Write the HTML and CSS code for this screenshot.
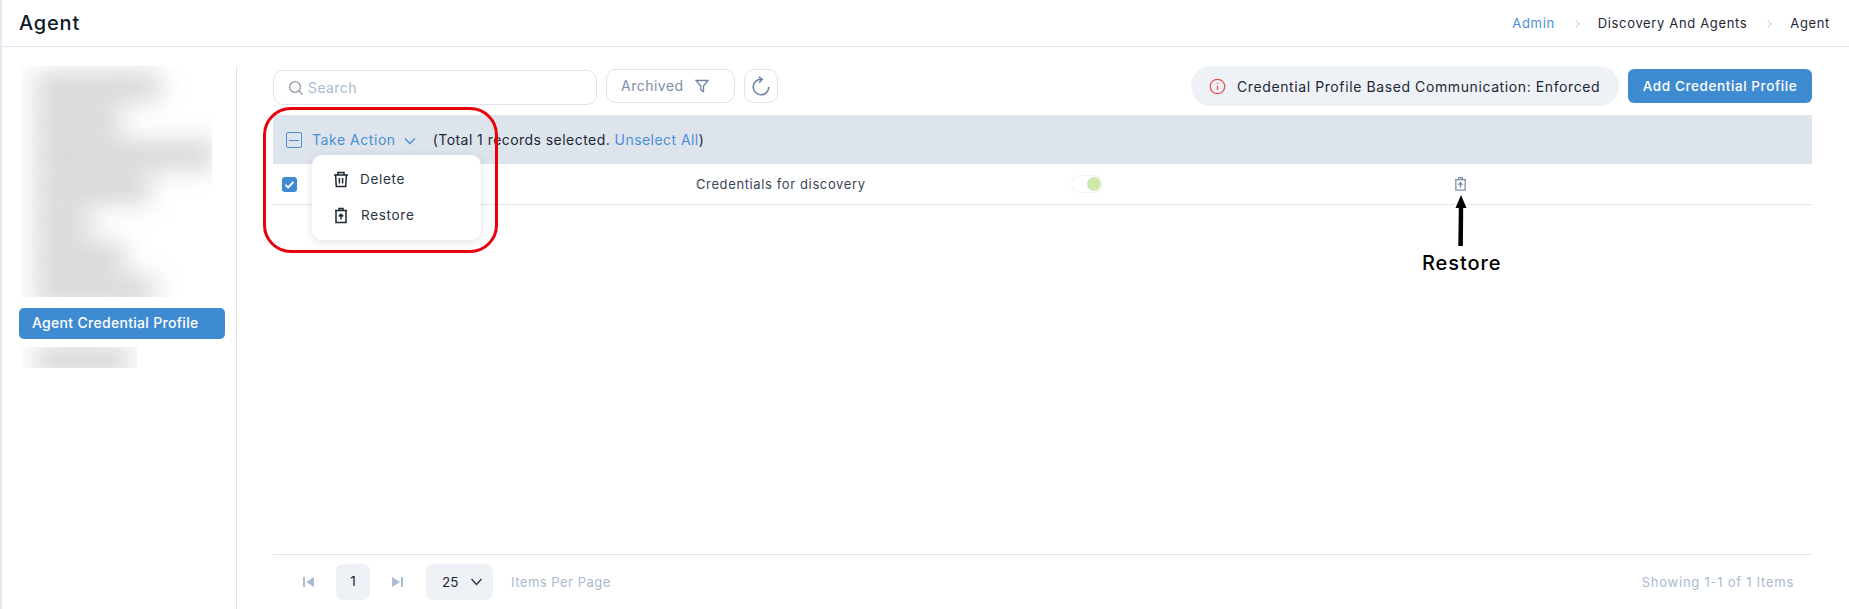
FILE: index.html
```html
<!DOCTYPE html>
<html lang="en">
<head>
<meta charset="utf-8">
<title>Agent</title>
<link rel="stylesheet" href="styles.css">
</head>
<body>
<div class="app">
  <header class="topbar">
    <h1 class="title">Agent</h1>
    <nav class="crumbs">
      <a class="crumb-link">Admin</a>
      <svg class="crumb-sep" viewBox="0 0 6 10"><path d="M1 1l4 4-4 4"/></svg>
      <span class="crumb">Discovery And Agents</span>
      <svg class="crumb-sep" viewBox="0 0 6 10"><path d="M1 1l4 4-4 4"/></svg>
      <span class="crumb last">Agent</span>
    </nav>
  </header>
  <div class="content">
    <aside class="side">
      <div class="blur-box tall">
        <div class="blur-rows">
          <i class="bar b1"></i><i class="bar b2"></i><i class="bar b3"></i><i class="bar b4"></i><i class="bar b5"></i><i class="bar b6"></i><i class="bar b7"></i>
        </div>
      </div>
      <div class="side-active">Agent Credential Profile</div>
      <div class="blur-box short"><div class="blur-rows"><i class="bar b8"></i></div></div>
    </aside>
    <main class="main">
      <div class="toolbar">
        <div class="search">
          <svg class="search-ic" viewBox="0 0 16 16"><circle cx="7" cy="7" r="5.4"/><path d="M11 11l3.600 3.600"/></svg>
          <span>Search</span>
        </div>
        <div class="archived">
          <span>Archived</span>
          <svg class="filter-ic" viewBox="0 0 14 14"><path d="M1 1.500h12L8.500 7v5.500L5.800 10.800V7z"/></svg>
        </div>
        <div class="refresh">
          <svg viewBox="0 0 20 20"><path d="M17.800 11A7.800 7.800 0 1 1 10.500 3.200"/><path d="M7.800.8l3.400 2.500-3 3.300"/></svg>
        </div>
        <div class="pill">
          <svg class="info-ic" viewBox="0 0 16 16"><circle cx="8" cy="8" r="6.8"/><path d="M8 7.200v4M8 4.600v1"/></svg>
          <span>Credential Profile Based Communication: Enforced</span>
        </div>
        <button class="add">Add Credential Profile</button>
      </div>
      <div class="select-bar">
        <span class="minus-box"><i></i></span>
        <span class="take">Take Action</span>
        <svg class="take-chev" viewBox="0 0 12 8"><path d="M1 1.500l5 5 5-5"/></svg>
        <span class="sel-text">(Total 1 records selected. <a>Unselect All</a>)</span>
      </div>
      <div class="row">
        <span class="check"><svg viewBox="0 0 16 16"><path d="M3.600 8.400l3 2.800 5.600-6"/></svg></span>
        <span class="desc">Credentials for discovery</span>
        <span class="toggle"><i></i></span>
        <svg class="row-restore" viewBox="0 0 14 16"><path d="M2 3.200h10v11.300H2zM1 3.200h12M5 3V1.200h4V3"/><path d="M7 12V7M4.800 8.800L7 6.600l2.200 2.200"/></svg>
      </div>
      <footer class="pager">
        <svg class="pg-ic" viewBox="0 0 11 12"><path d="M0 1h2v10H0zM11 1v10L3 6z"/></svg>
        <span class="page-box">1</span>
        <svg class="pg-ic" viewBox="0 0 11 12"><path d="M9 1h2v10H9zM0 1v10l8-5z"/></svg>
        <span class="size-box">25<svg viewBox="0 0 12 8"><path d="M1 1l5 5.500L11 1"/></svg></span>
        <span class="ipp">Items Per Page</span>
        <span class="showing">Showing 1-1 of 1 Items</span>
      </footer>
    </main>
  </div>

  <div class="menu">
    <div class="menu-item">
      <svg class="m-ic" viewBox="0 0 16 17"><path d="M1 4h14M5 4V1.400h6V4M2.600 4l.7 11.600h9.400L13.400 4M6.400 7v5.600M9.600 7v5.600"/></svg>
      <span>Delete</span>
    </div>
    <div class="menu-item two">
      <svg class="m-ic" viewBox="0 0 16 17"><path d="M3 3.400h10v12.200H3zM2 3.400h12M6 3.200V1.400h4v1.800"/><path d="M8 12.600V7.400M5.800 9.400L8 7.200l2.200 2.200"/></svg>
      <span>Restore</span>
    </div>
  </div>
  <div class="red-box"></div>
  <svg class="arrow" viewBox="0 0 14 52"><path d="M7 0l5.500 13H9.200L8.900 51H4.300L4.800 13H1.500z"/></svg>
  <div class="callout">Restore</div>
</div>
</body>
</html>
```
FILE: styles.css
```css
* { box-sizing: border-box; }
html, body { margin: 0; height: 100%; background: #fff; }
body { font-family: Inter, "Liberation Sans", sans-serif; color: #2a3542; overflow: hidden; }
svg { display: block; flex: none; }

.app { position: relative; width: 1849px; height: 609px; border-left: 2px solid #e3e9f1; display: flex; flex-direction: column; }

.topbar { height: 47px; flex: none; border-bottom: 1px solid #dee5ee; display: flex; align-items: center; justify-content: space-between; padding: 0 19px 1px 17px; }
.title { margin: 0; font-size: 20px; font-weight: 500; color: #0f1b2a; letter-spacing: .8px; }
.crumbs { display: flex; align-items: center; font-size: 13px; letter-spacing: .65px; color: #1c2735; }
.crumb-link { color: #4a8fd4; }
.crumb-sep { width: 5px; height: 8px; margin: 3px 18px 0 20px; }
.crumb-sep path { fill: none; stroke: #a9bad0; stroke-width: 1; }

.content { flex: 1; display: flex; min-height: 0; padding: 19px 37px 0 17px; }

.side { width: 218px; flex: none; border-right: 1px solid #e2e6ec; margin-right: 36px; }
.blur-box { overflow: hidden; margin-left: 2px; width: 191px; background: #fff; }
.blur-box.tall { height: 231px; }
.blur-box.short { height: 21px; width: 116px; }
.blur-rows { display: flex; flex-direction: column; gap: 8px; padding: 8px 0 0 14px; filter: blur(13px); }
.bar { display: block; height: 26px; background: #cfd1d3; }
.b1 { width: 125px; } .b2 { width: 85px; } .b3 { width: 180px; } .b4 { width: 115px; }
.b5 { width: 55px; } .b6 { width: 90px; } .b7 { width: 120px; }
.b8 { width: 95px; margin-top: -8px; }
.side-active { margin: 11px 0 8px; width: 206px; height: 31px; border-radius: 5px; background: #3f8bd2; color: #fff; font-size: 14px; font-weight: 500; line-height: 29px; padding-left: 13px; letter-spacing: .3px; }

.main { flex: 1; min-width: 0; display: flex; flex-direction: column; }

.toolbar { height: 42px; margin-bottom: 7px; flex: none; display: flex; align-items: center; }
.search { width: 324px; height: 35px; border: 1px solid #dfe5ee; border-radius: 10px; display: flex; align-items: center; gap: 4px; padding-left: 14px; color: #a8bbd2; font-size: 14px; letter-spacing: .4px; margin-top: 1px; }
.search-ic { width: 16px; height: 16px; }
.search-ic circle, .search-ic path { fill: none; stroke: #8f98a3; stroke-width: 1.3; }
.archived { width: 129px; height: 34px; margin-left: 9px; margin-top: -3px; border: 1px solid #dfe5ee; border-radius: 10px; display: flex; align-items: center; padding-left: 14px; gap: 11px; color: #7e8fa6; font-size: 14px; letter-spacing: .5px; }
.filter-ic { width: 14px; height: 14px; margin-top: 1px; }
.filter-ic path { fill: none; stroke: #6f86a3; stroke-width: 1.3; }
.refresh { width: 34px; height: 34px; margin-left: 9px; margin-top: -3px; border: 1px solid #dfe5ee; border-radius: 10px; display: flex; align-items: center; justify-content: center; }
.refresh svg { width: 20px; height: 20px; }
.refresh path { fill: none; stroke: #6f86a3; stroke-width: 1.6; }
.pill { margin-left: auto; width: 428px; height: 40px; border-radius: 20px; background: #eef1f6; display: flex; align-items: center; gap: 11px; padding-left: 18px; font-size: 14px; color: #1c2735; letter-spacing: .6px; margin-top: -2px; }
.info-ic { width: 17px; height: 17px; }
.info-ic circle, .info-ic path { fill: none; stroke: #e8554e; stroke-width: 1.2; }
.add { margin-left: 9px; width: 184px; height: 34px; border: 0; border-radius: 6px; background: #3f8bd2; color: #fff; font: 500 13.5px Inter, "Liberation Sans", sans-serif; letter-spacing: .6px; margin-top: -3px; }

.select-bar { height: 49px; flex: none; background: #dee4ec; display: flex; align-items: center; padding-left: 13px; font-size: 14px; }
.minus-box { width: 16px; height: 16px; border: 1px solid #4a8fd4; border-radius: 2px; display: flex; align-items: center; justify-content: center; margin-top: 1px; }
.minus-box i { width: 10px; height: 1px; background: #4a8fd4; }
.take { margin-left: 10px; color: #4a8fd4; letter-spacing: .55px; }
.take-chev { width: 12px; height: 8px; margin-left: 8px; margin-top: 2px; }
.take-chev path { fill: none; stroke: #4a8fd4; stroke-width: 1.4; }
.sel-text { margin-left: 17px; color: #1c2735; letter-spacing: .45px; }
.sel-text a { color: #4a8fd4; }

.row { height: 41px; flex: none; border-bottom: 1px solid #dee5ee; display: flex; align-items: center; padding-left: 9px; font-size: 13px; color: #3a4655; }
.check { width: 15px; height: 15px; border-radius: 3px; background: #3f8bd2; display: block; }
.check path { fill: none; stroke: #fff; stroke-width: 2; }
.desc { margin-left: 399px; width: 375px; letter-spacing: .62px; }
.toggle { width: 32px; height: 18px; border-radius: 9px; border: 1px solid #f0f2f5; position: relative; display: block; }
.toggle i { position: absolute; left: 15px; top: 1px; width: 14px; height: 14px; border-radius: 50%; background: #cfe8ab; }
.row-restore { width: 13px; height: 16px; margin-left: 351px; }
.row-restore path { fill: none; stroke: #7a8fab; stroke-width: 1.4; }

.pager { margin-top: auto; height: 55px; flex: none; border-top: 1px solid #dee5ee; display: flex; align-items: center; font-size: 13.5px; }
.pg-ic { width: 11px; height: 12px; fill: #a9bcd4; }
.pager .pg-ic:first-child { margin-left: 30px; }
.page-box { width: 34px; height: 36px; border-radius: 7px; background: #eef1f6; margin: 0 22px 0 22px; text-align: center; line-height: 35px; color: #1c2735; }
.size-box { width: 67px; height: 36px; border-radius: 7px; background: #eef1f6; margin-left: 23px; display: flex; align-items: center; padding-left: 16px; gap: 12px; color: #1c2735; }
.size-box svg { width: 13px; height: 8px; }
.size-box path { fill: none; stroke: #2a3542; stroke-width: 1.3; }
.ipp { margin-left: 18px; color: #a8bbd2; font-size: 13px; letter-spacing: .5px; }
.showing { margin-left: auto; margin-right: 18px; color: #a8bbd2; font-size: 13px; letter-spacing: .75px; }

.menu { position: absolute; left: 310px; top: 155px; width: 169px; height: 85px; background: #fff; border-radius: 10px; box-shadow: 0 2px 10px rgba(40,50,70,.14); padding-top: 6px; font-size: 13.5px; color: #2a3542; letter-spacing: .7px; }
.menu-item { height: 36px; display: flex; align-items: center; padding-left: 21px; gap: 11px; }
.menu-item.two { gap: 12px; }
.m-ic { width: 16px; height: 17px; }
.m-ic path { fill: none; stroke: #1d2836; stroke-width: 1.5; }
.red-box { position: absolute; left: 261px; top: 107px; width: 235px; height: 146px; border: 3px solid #e8000b; border-radius: 28px; pointer-events: none; }
.arrow { position: absolute; left: 1452px; top: 195px; width: 14px; height: 52px; fill: #000; }
.callout { position: absolute; left: 1420px; top: 251px; font-size: 20px; font-weight: 500; color: #000; letter-spacing: .9px; }
```
